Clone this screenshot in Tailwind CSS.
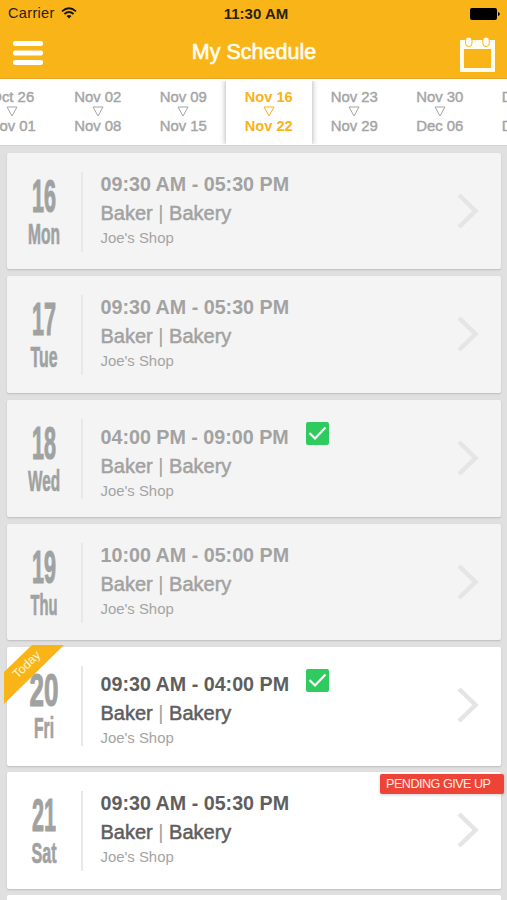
<!DOCTYPE html>
<html lang="en">
<head>
<meta charset="utf-8">
<title>My Schedule</title>
<script src="https://cdn.jsdelivr.net/npm/@tailwindcss/browser@4"></script>
</head>
<body class="w-[507px] h-[900px] overflow-hidden bg-[#e0e0e0] font-['Liberation_Sans',sans-serif]">
<div class="w-[507px] h-[900px] overflow-hidden flex flex-col">
  <header class="h-[79px] shrink-0 bg-[#f9b518] border-b border-[#e3a62a] flex flex-col">
    <div class="h-7 grid grid-cols-3 items-center pl-2 pr-[7px] text-[14.6px] text-[#2a210c]">
      <div class="flex items-center gap-[6px]"><span class="tracking-[0.3px]">Carrier</span>
        <svg class="w-4 h-3 -mt-[2px]" viewBox="0 0 16 12" fill="none" stroke="#1c1608" stroke-width="1.9"><path d="M1 4.4Q8-1.8 15 4.4M3.4 7Q8 3 12.6 7"/><path d="M8 11.6L5.5 9Q8 7 10.500 9Z" fill="#1c1608" stroke="none"/></svg>
      </div>
      <div class="text-center font-bold text-[15px] pl-[4px] whitespace-nowrap">11:30 AM</div>
      <svg class="justify-self-end w-[30px] h-3" viewBox="0 0 30 12"><rect width="27" height="12" rx="2" fill="#000"/><path d="M28 4Q29.800 4.500 29.800 6T28 8Z" fill="#000"/></svg>
    </div>
    <div class="h-[50px] flex items-center justify-between pl-[13px] pr-3">
      <svg class="w-[30px] h-[26px] -mt-[1px]" viewBox="0 0 30 26" fill="#fff"><rect y="1" width="30" height="5" rx="2"/><rect y="10.500" width="30" height="5" rx="2"/><rect y="20" width="30" height="5" rx="2"/></svg>
      <h1 class="text-[21.5px] pl-[5px] text-[#fffdf2] leading-none [-webkit-text-stroke:0.6px_#fffdf2]">My Schedule</h1>
      <svg class="w-[35px] h-[35px] mt-[3px]" viewBox="0 0 35 35"><path fill="#fffdf2" fill-rule="evenodd" d="M0 3H35V35H0ZM4 12V31H31V12Z"/><g fill="#fffdf2" stroke="#f9b518"><rect x="5.500" y="0" width="6.500" height="9.500" rx="3.200"/><rect x="22.800" y="0" width="6.500" height="9.500" rx="3.200"/></g></svg>
    </div>
  </header>
  <nav id="weeks" class="h-[66px] shrink-0 bg-white flex ml-[-30.5px] w-[600px]"></nav>
  <main id="days" class="flex flex-col pl-[7px] pr-[6px] pt-[7px] border-t border-[#d2d2d2]"></main>
</div>
<script>
const weeks = [["Oct 26","Nov 01"],["Nov 02","Nov 08"],["Nov 09","Nov 15"],["Nov 16","Nov 22"],["Nov 23","Nov 29"],["Nov 30","Dec 06"],["Dec 07","Dec 13"]];
document.getElementById("weeks").innerHTML = weeks.map(([from, to], i) => {
  const look = i === 3
    ? "text-[#fbb216] font-bold text-[14.6px] shadow-[0_0_6px_rgba(0,0,0,0.35)] [clip-path:inset(2px_-8px_1px_-8px)] relative"
    : "text-[#a4a4a4] text-[14.9px] [-webkit-text-stroke:0.4px_#a4a4a4]";
  return `<div class="w-[85.5px] shrink-0 bg-white flex flex-col items-center pt-[10px] leading-[17px] ${look}">
    <span>${from}</span>
    <svg class="w-3 h-[12px]" viewBox="0 0 12 12" fill="none" stroke="currentColor"><path d="M1 1H11L6 10Z"/></svg>
    <span>${to}</span></div>`;
}).join("");

const days = [
  {n:16, d:"Mon", w:32, t:"09:30 AM - 05:30 PM", past:1, size:"h-[116px] mb-[7px]"},
  {n:17, d:"Tue", w:27, t:"09:30 AM - 05:30 PM", past:1, size:"h-[117px] mb-[7px]"},
  {n:18, d:"Wed", w:32, t:"04:00 PM - 09:00 PM", past:1, ok:1, size:"h-[117px] mb-[7px]"},
  {n:19, d:"Thu", w:27, t:"10:00 AM - 05:00 PM", past:1, size:"h-[116px] mb-[7px]"},
  {n:20, d:"Fri", w:20, t:"09:30 AM - 04:00 PM", ok:1, today:1, size:"h-[119px] mb-[6px]"},
  {n:21, d:"Sat", w:25, t:"09:30 AM - 05:30 PM", pending:1, size:"h-[117px] mb-[6px]"}
];
document.getElementById("days").innerHTML = days.map(r => {
  const nw = r.n === 20 ? 29 : 24;
  return `<article class="relative shrink-0 flex rounded-[2px] shadow-[0_1px_2px_rgba(0,0,0,0.16)] ${r.size} ${r.past ? "bg-[#f4f4f4] text-[#a2a2a2]" : "bg-white text-[#5e5e5e]"}">
    <svg class="w-[74px] h-[116px] shrink-0" viewBox="0 0 74 116" font-weight="bold" fill="#a0a2a2" stroke="#a0a2a2">
      <text x="${37 - nw / 2}" y="58.500" font-size="46" stroke-width="1.2" textLength="${nw}" lengthAdjust="spacingAndGlyphs">${r.n}</text>
      <text x="${37 - r.w / 2}" y="91" font-size="30" stroke-width="0.7" textLength="${r.w}" lengthAdjust="spacingAndGlyphs">${r.d}</text>
    </svg>
    <div class="w-[2px] h-20 mt-[19px] bg-[#e8e8e8]"></div>
    <div class="pl-[17.500px] flex flex-col ${r.ok ? "pt-[26px]" : "pt-[20px]"}">
      <div class="flex items-center h-[24px] gap-[17px]"><span class="text-[19.7px] font-bold whitespace-nowrap">${r.t}</span>${r.ok ? `<svg class="w-[23px] h-[23px] -mt-[9px]" viewBox="0 0 23 23"><rect width="23" height="23" rx="2" fill="#2fcb5e"/><path d="M3.500 11L9 16.500L19.500 5.500" fill="none" stroke="#fff" stroke-width="2.200"/></svg>` : ""}</div>
      <div class="h-[30px] leading-[32px] text-[20px] [-webkit-text-stroke:0.5px_currentColor]">Baker <span class="[-webkit-text-stroke:0px] text-[#a2a2a2]">|</span> Bakery</div>
      <div class="leading-[23px] text-[14.9px] text-[#a4a4a4]">Joe's Shop</div>
    </div>
    <svg class="ml-auto mr-[22px] mt-[40px] w-[22px] h-[36px]" viewBox="0 0 22 36"><path d="M2 2L18.500 18L2 34" fill="none" stroke="#e5e5e5" stroke-width="4.500"/></svg>
    ${r.today ? `<svg class="absolute -left-[3px] -top-[2px] w-[60px] h-[60px]" viewBox="0 0 60 60"><path d="M28 0H60L0 59V27Z" fill="#f9b518"/><text transform="translate(13.500 34) rotate(-44)" font-size="12.400" fill="#fff6d8">Today</text></svg>` : ""}
    ${r.pending ? `<div class="absolute left-[373px] top-[2px] w-[124px] h-[20px] rounded-[2px] bg-[#ee4437] shadow-[0_1px_3px_rgba(0,0,0,0.2)] text-[#ffebe5] text-[12.6px] tracking-[-0.5px] leading-[21px] pl-[6px] whitespace-nowrap">PENDING GIVE UP</div>` : ""}
  </article>`;
}).join("") + `<article class="h-[20px] shrink-0 bg-white rounded-[2px]"></article>`;
</script>
</body>
</html>
